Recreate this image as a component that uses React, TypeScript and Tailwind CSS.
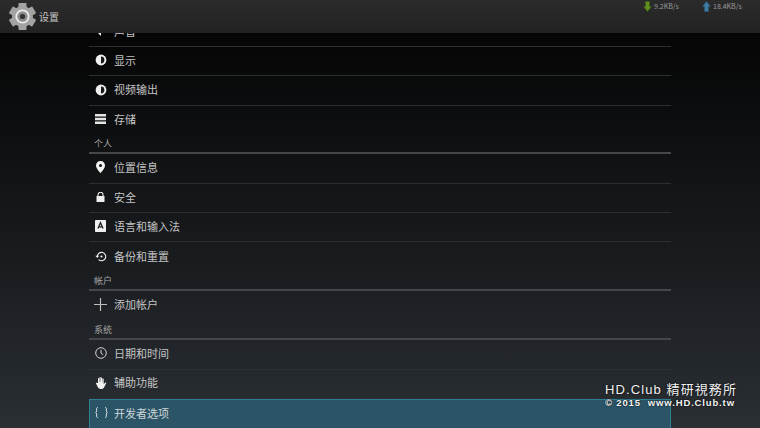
import React from 'react';

const cjk = { fontFamily: '"Noto Sans CJK SC", "Noto Sans", sans-serif' };

const Gear = () => (
  <svg viewBox="0 0 27 27" className="w-[27px] h-[27px] shrink-0">
    <g fill="#a3a3a3">
      {[0, 60, 120].map((a) => (
        <rect key={a} x="9.5" y="0" width="8" height="27" rx="1" transform={`rotate(${a} 13.5 13.5)`} />
      ))}
      <circle cx="13.5" cy="13.5" r="10.5" />
    </g>
    <circle cx="13.5" cy="13.5" r="7" fill="#ececec" />
    <circle cx="13.5" cy="13.5" r="5.2" fill="#8c8c8c" />
    <circle cx="13.5" cy="13.5" r="2.6" fill="#333333" />
  </svg>
);

const Brightness = () => (
  <svg viewBox="0 0 12 12" className="w-3 h-3">
    <circle cx="6" cy="6" r="5.4" fill="#f0f0f0" />
    <path d="M6 2.6a3.4 3.4 0 0 1 0 6.8z" fill="#17191b" />
  </svg>
);

const Storage = () => (
  <svg viewBox="0 0 11 10" className="w-[11px] h-[10px]">
    <path d="M0 0h11v2.6H0zM0 3.7h11v2.6H0zM0 7.4h11V10H0z" fill="#e4e4e4" />
  </svg>
);

const Pin = () => (
  <svg viewBox="0 0 9 12" className="w-[9px] h-3">
    <path fillRule="evenodd" d="M4.5 0A4.4 4.4 0 0 0 0 4.4C0 7.4 4.5 12 4.5 12S9 7.4 9 4.4A4.4 4.4 0 0 0 4.5 0zm0 3a1.5 1.5 0 1 1 0 3 1.5 1.5 0 0 1 0-3z" fill="#f2f2f2" />
  </svg>
);

const Lock = () => (
  <svg viewBox="0 0 9 10" className="w-[9px] h-[10px]">
    <path d="M2 4V2.8a2.5 2.5 0 0 1 5 0V4" fill="none" stroke="#f0f0f0" strokeWidth="1.1" />
    <rect x="0.5" y="4" width="8" height="6" rx="0.5" fill="#f0f0f0" />
  </svg>
);

const LangBox = () => (
  <svg viewBox="0 0 11 12" className="w-[11px] h-3">
    <rect width="11" height="12" rx="0.8" fill="#f0f0f0" />
    <path d="M3 8.6L5.5 2.6 8 8.6M3.9 6.8h3.2" fill="none" stroke="#1b1e20" strokeWidth="1.3" />
  </svg>
);

const Restore = () => (
  <svg viewBox="0 0 12 11" className="w-3 h-[11px]">
    <path d="M2.3 5.5a4.2 4.2 0 1 1 1.3 3.1" fill="none" stroke="#eee" strokeWidth="1.1" />
    <path d="M0.3 4.8h4L2.3 7z" fill="#eee" />
    <circle cx="6.5" cy="5.5" r="1.1" fill="#eee" />
  </svg>
);

const Plus = () => (
  <svg viewBox="0 0 13 13" className="w-[13px] h-[13px]">
    <path d="M6.5 0v13M0 6.5h13" stroke="#bdbdbd" strokeWidth="1.2" />
  </svg>
);

const Clock = () => (
  <svg viewBox="0 0 12 12" className="w-3 h-3">
    <circle cx="6" cy="6" r="5.3" fill="none" stroke="#d0d0d0" strokeWidth="1" />
    <path d="M6 2.8v3.4l2.2 1.6" fill="none" stroke="#d0d0d0" strokeWidth="1" />
  </svg>
);

const Hand = () => (
  <svg viewBox="0 0 12 13" className="w-3 h-[13px]">
    <path d="M3 7V2.6a.6.6 0 0 1 1.2 0V6h.3V1.5a.6.6 0 0 1 1.2 0V6H6V2a.6.6 0 0 1 1.2 0v4.2h.3V3.2a.6.6 0 0 1 1.2 0v5l1.4-1.4c.5-.5 1.5.1 1 .8L9 11.4c-.7 1-1.6 1.6-3 1.6-1.9 0-3-1-3.5-2.4L1 7.6c-.3-.7.6-1.2 1.1-.6z" fill="#f2f2f2" />
  </svg>
);

const Braces = () => (
  <svg viewBox="0 0 13 11" className="w-[13px] h-[11px]">
    <path d="M3 .5c-1.2 0-1.4.6-1.4 1.5v1.8c0 .9-.3 1.5-1 1.7.7.2 1 .8 1 1.7V9c0 .9.2 1.5 1.4 1.5M10 .5c1.2 0 1.4.6 1.4 1.5v1.8c0 .9.3 1.5 1 1.7-.7.2-1 .8-1 1.7V9c0 .9-.2 1.5-1.4 1.5" fill="none" stroke="#dfe6e8" strokeWidth="1" />
  </svg>
);

const Row = ({ icon, label, last }: { icon: React.ReactNode; label: string; last?: boolean }) => (
  <div className={`flex items-center h-[29.4px] pb-[2px] ${last ? '' : 'border-b border-[#2c2f32]'}`}>
    <div className="w-[23px] mr-[2px] flex justify-center">{icon}</div>
    <span className="text-[11px] text-[#c4c4c4]">{label}</span>
  </div>
);

const Section = ({ label, tall }: { label: string; tall?: boolean }) => (
  <div className={`${tall ? 'h-[20px]' : 'h-[19px]'} flex items-center pl-[5px] border-b-2 border-[#45484b] text-[9px] text-[#a6a6a6]`}>
    <span className="mt-[1px]">{label}</span>
  </div>
);

export default function App() {
  return (
    <div
      className="relative w-[760px] h-[428px] overflow-hidden flex flex-col bg-gradient-to-b from-[#040404] to-[#2a2f34]"
      style={cjk}
    >
      <header className="h-[33px] shrink-0 flex items-center pl-[9px] bg-gradient-to-b from-[#2b2b2b] to-[#222222] z-10">
        <Gear />
        <span className="ml-[3px] mt-[-1px] text-[10px] text-[#c4c4c4]">设置</span>
        <div className="ml-auto flex items-start self-start pt-[1px] pr-[2px] text-[7px] text-[#9a9a9a]">
          <div className="flex items-center gap-[2px] w-[59px]">
            <svg viewBox="0 0 9 11" className="w-[9px] h-[11px]">
              <path d="M2.5 .5h4v5h2l-4 5-4-5h2z" fill="#5f8f1f" stroke="#3d5a16" strokeWidth="0.6" />
            </svg>
            <span>9.2KB/s</span>
          </div>
          <div className="flex items-center gap-[2px] w-[56px]">
            <svg viewBox="0 0 9 11" className="w-[9px] h-[11px]">
              <path d="M2.5 10.5h4v-5h2l-4-5-4 5h2z" fill="#3f7ca3" stroke="#2a5570" strokeWidth="0.6" />
            </svg>
            <span>18.4KB/s</span>
          </div>
        </div>
      </header>

      <main className="mx-[89px] w-[582px]">
        <div className="mt-[-15.4px]">
          <Row
            label="声音"
            icon={
              <svg viewBox="0 0 12 12" className="w-3 h-3">
                <path d="M0 4h3l3-3v10L3 8H0z" fill="#eee" />
              </svg>
            }
          />
          <Row label="显示" icon={<Brightness />} />
          <Row label="视频输出" icon={<Brightness />} />
          <Row label="存储" icon={<Storage />} last />
          <Section label="个人" />
          <Row label="位置信息" icon={<Pin />} />
          <Row label="安全" icon={<Lock />} />
          <Row label="语言和输入法" icon={<LangBox />} />
          <Row label="备份和重置" icon={<Restore />} last />
          <Section label="帐户" />
          <Row label="添加帐户" icon={<Plus />} last />
          <Section label="系统" tall />
          <Row label="日期和时间" icon={<Clock />} />
          <Row label="辅助功能" icon={<Hand />} />
          <div className="flex items-center h-[30px] pb-[2px] bg-[#2b5567] border border-[#2f7f99]">
            <div className="w-[22px] mr-[2px] flex justify-center">
              <Braces />
            </div>
            <span className="text-[11px] text-[#cfd6d9]">开发者选项</span>
          </div>
        </div>
      </main>

      <div className="absolute left-[605px] top-[382px] text-[#f2f2f2] [text-shadow:0_0_2px_#000]">
        <div className="text-[13px] leading-[15px] tracking-[1.1px] whitespace-nowrap" style={{ fontFamily: '"Liberation Sans", "Noto Sans CJK TC", sans-serif' }}>
          HD.Club 精研視務所
        </div>
        <div className="text-[9.5px] leading-[11px] tracking-[0.85px] font-bold whitespace-nowrap" style={{ fontFamily: '"Liberation Sans", sans-serif' }}>
          © 2015&nbsp; www.HD.Club.tw
        </div>
      </div>
    </div>
  );
}
